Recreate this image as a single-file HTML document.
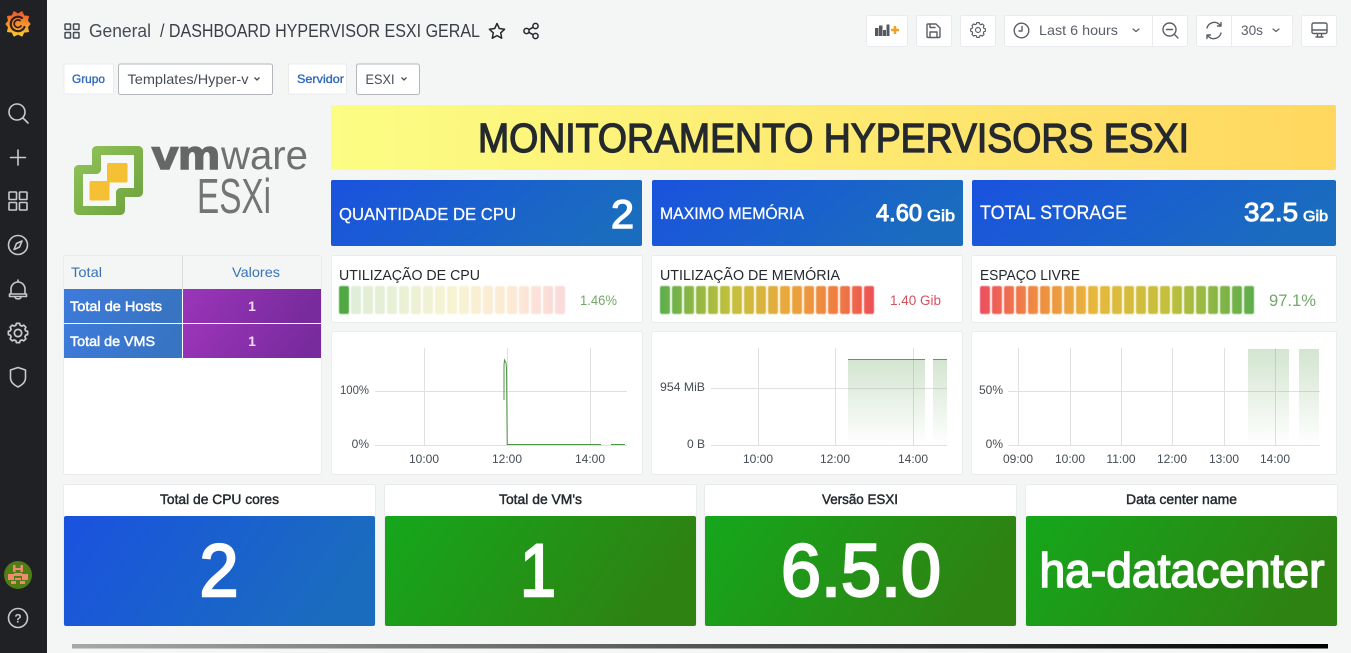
<!DOCTYPE html>
<html><head><meta charset="utf-8"><title>Dashboard</title>
<style>
html,body{margin:0;padding:0;width:1351px;height:653px;overflow:hidden;background:#f4f5f5}
svg{display:block;font-family:"Liberation Sans",sans-serif}
.p{fill:#fff;stroke:#e9ebee;stroke-width:1}
.ax{font-size:12px;fill:#464c54}
.gl{stroke:#dfe0e2;stroke-width:1;fill:none}
.ic{fill:none;stroke:#c7c9cb;stroke-width:1.6;stroke-linecap:round;stroke-linejoin:round}
.tb{fill:none;stroke:#5a5f66;stroke-width:1.4;stroke-linecap:round;stroke-linejoin:round}
.w{fill:#fff}
.m{stroke-width:.6;stroke:currentColor}
.t{fill:#24292e;font-size:14px}
</style></head><body>
<svg width="1351" height="653" viewBox="0 0 1351 653" xmlns="http://www.w3.org/2000/svg">
<defs>
<linearGradient id="yel" x1="0" x2="1" y1="0" y2="0"><stop offset="0" stop-color="#fcfd84"/><stop offset="1" stop-color="#ffd75f"/></linearGradient>
<linearGradient id="blu" x1="0" x2="1" y1="0" y2=".25"><stop offset="0" stop-color="#1a52df"/><stop offset="1" stop-color="#1a6cbf"/></linearGradient>
<linearGradient id="grn" x1="0" x2="1" y1="0" y2=".25"><stop offset="0" stop-color="#15a71c"/><stop offset="1" stop-color="#2e8212"/></linearGradient>
<linearGradient id="tb1" x1="0" x2="1" y1="0" y2=".2"><stop offset="0" stop-color="#3e7bdc"/><stop offset="1" stop-color="#3874c2"/></linearGradient>
<linearGradient id="tb2" x1="0" x2="1" y1="0" y2=".2"><stop offset="0" stop-color="#9c35bb"/><stop offset="1" stop-color="#782b9c"/></linearGradient>
<linearGradient id="bot" x1="0" x2="1" y1="0" y2="0"><stop offset="0" stop-color="#a8a8a8"/><stop offset="1" stop-color="#000"/></linearGradient>
<linearGradient id="area" x1="0" x2="0" y1="0" y2="1"><stop offset="0" stop-color="#5a9e50" stop-opacity=".27"/><stop offset="1" stop-color="#5a9e50" stop-opacity="0"/></linearGradient>
<linearGradient id="gf" x1="0" x2="0" y1="0" y2="1"><stop offset="0" stop-color="#f0562a"/><stop offset="1" stop-color="#fbca2b"/></linearGradient>
<linearGradient id="lg" x1="0" x2="1" y1="0" y2="1"><stop offset="0" stop-color="#8fc257"/><stop offset="1" stop-color="#6fa33f"/></linearGradient>
<linearGradient id="gc" gradientUnits="userSpaceOnUse" x1="339" x2="565" y1="0" y2="0"><stop offset="0" stop-color="#58ad4a"/><stop offset=".5" stop-color="#d9c83c"/><stop offset=".75" stop-color="#f0a040"/><stop offset="1" stop-color="#ec4f55"/></linearGradient>
<linearGradient id="gm" gradientUnits="userSpaceOnUse" x1="660" x2="874" y1="0" y2="0"><stop offset="0" stop-color="#5cae4c"/><stop offset=".33" stop-color="#c4c03c"/><stop offset=".6" stop-color="#eaa83c"/><stop offset=".83" stop-color="#f07c42"/><stop offset="1" stop-color="#ec4f55"/></linearGradient>
<linearGradient id="gs" gradientUnits="userSpaceOnUse" x1="980" x2="1254" y1="0" y2="0"><stop offset="0" stop-color="#ec4f60"/><stop offset=".2" stop-color="#f08a42"/><stop offset=".42" stop-color="#e6b83c"/><stop offset=".68" stop-color="#c4c03c"/><stop offset="1" stop-color="#5cae4c"/></linearGradient>
<filter id="soft" x="-2%" y="-10%" width="104%" height="120%"><feGaussianBlur stdDeviation=".6"/></filter>
</defs>
<rect width="1351" height="653" fill="#f4f5f5"/>
<!-- sidebar -->
<rect width="47" height="653" fill="#1f2125"/>
<polygon points="30,24 27.5,27.1 28.5,31.6 23.9,32.1 22,36 18,34 14,36 12.1,32.1 7.500,31.6 8.500,27.1 6,24 8.500,20.900 7.500,16.400 12.100,15.900 14,11.600 18,14 22,11.600 23.900,15.900 28.500,16.400 27.500,20.900" fill="url(#gf)" stroke="url(#gf)" stroke-width="1" stroke-linejoin="round"/>
<path d="M24.500 27a7.200 7.200 0 1 1-2.500-9" fill="none" stroke="#33201f" stroke-width="2.200" stroke-linecap="round"/>
<path d="M21 26a3.800 3.800 0 1 1-1-5.500" fill="none" stroke="#33201f" stroke-width="1.800" stroke-linecap="round"/>
<g class="ic">
<circle cx="17" cy="112" r="8"/><path d="M23 118l5 5"/>
<path d="M18 150v15M10.500 157.500h15"/>
<rect x="9" y="192" width="7.500" height="7.500" rx=".8"/><rect x="19.500" y="192" width="7.500" height="7.500" rx=".8"/><rect x="9" y="202.500" width="7.500" height="7.500" rx=".8"/><rect x="19.500" y="202.500" width="7.500" height="7.500" rx=".8"/>
<circle cx="18" cy="245" r="9.500"/><path d="M22 241l-2.500 6-3 1.500-2.500 1 2.500-6z"/>
<path d="M18 280v2M11 294v-5a7 7 0 0 1 14 0v5M9.500 294h17v2.500h-17zM15 297c0 2.500 6 2.500 6 0"/>
<g transform="translate(18 333) scale(1.08)"><path d="M-1.500-8.900h3l.5 1.800 1.600.7 1.700-.9 2 2-.9 1.700.7 1.600 1.800.5v3l-1.800.5-.7 1.600.9 1.700-2 2-1.700-.9-1.600.7-.5 1.800h-3l-.5-1.800-1.600-.7-1.700.9-2-2 .9-1.700-.7-1.600-1.800-.5v-3l1.800-.5.7-1.600-.9-1.700 2-2 1.700.9 1.600-.7z"/><circle cx="0" cy="0" r="3.400"/></g>
<path d="M10.500 370l7.500-2.500 7.500 2.500v8c0 4-3.500 7-7.500 9-4-2-7.500-5-7.500-9z"/>
<circle cx="18" cy="618" r="9.500"/>
</g>
<text x="18" y="622.500" text-anchor="middle" font-size="12" font-weight="bold" fill="#c7c9cb">?</text>
<circle cx="18" cy="575" r="14" fill="#4f7d16"/>
<g fill="#f08a6e"><rect x="13" y="565" width="2.500" height="7"/><rect x="20.500" y="565" width="2.500" height="7"/><rect x="13" y="568" width="10" height="2"/><rect x="8" y="574" width="6" height="6"/><rect x="22" y="574" width="6" height="6"/><rect x="14" y="573" width="8" height="3"/><rect x="15" y="578" width="6" height="2"/><rect x="11" y="581" width="5" height="3"/><rect x="20" y="581" width="5" height="3"/></g>
<!-- header -->
<g fill="none" stroke="#464c54" stroke-width="1.500"><rect x="65" y="24" width="5.500" height="5.500" rx=".6"/><rect x="73.500" y="24" width="5.500" height="5.500" rx=".6"/><rect x="65" y="32.500" width="5.500" height="5.500" rx=".6"/><rect x="73.500" y="32.500" width="5.500" height="5.500" rx=".6"/></g>
<text x="89" y="37" font-size="18" fill="#464c54" textLength="62" lengthAdjust="spacingAndGlyphs">General</text>
<text x="160" y="37" font-size="18" fill="#3a3f46" textLength="320" lengthAdjust="spacingAndGlyphs">/ DASHBOARD HYPERVISOR ESXI GERAL</text>
<path d="M497 23.500l2.300 5 5.300.7-3.900 3.700 1 5.300-4.700-2.600-4.700 2.600 1-5.300-3.900-3.700 5.300-.7z" fill="none" stroke="#24292e" stroke-width="1.500" stroke-linejoin="round"/>
<g fill="none" stroke="#24292e" stroke-width="1.500"><circle cx="535.500" cy="26" r="2.600"/><circle cx="526.500" cy="31" r="2.600"/><circle cx="535.500" cy="36" r="2.600"/><path d="M528.800 29.700l4.400-2.500M528.800 32.300l4.400 2.500"/></g>
<!-- toolbar -->
<g class="p"><rect x="866.500" y="15.500" width="41" height="31" rx="2"/><rect x="916.500" y="15.500" width="35" height="31" rx="2"/><rect x="960.500" y="15.500" width="35" height="31" rx="2"/><rect x="1004.500" y="15.500" width="183" height="31" rx="2"/><rect x="1196.500" y="15.500" width="96" height="31" rx="2"/><rect x="1301.500" y="15.500" width="35" height="31" rx="2"/></g>
<path d="M1152.500 15.500v31M1231.500 15.500v31" stroke="#e9ebee"/>
<g fill="#55595f"><rect x="875" y="28" width="3.500" height="8"/><rect x="879" y="25.500" width="3.500" height="10.500"/><rect x="883" y="30" width="3" height="6"/><rect x="886.500" y="24.500" width="3" height="11.500"/></g>
<path d="M895 26v8M891 30h8" stroke="#f2a02d" stroke-width="2.600"/>
<g class="tb">
<path d="M928 24h8l4 4v8.500a1 1 0 0 1-1 1h-11a1 1 0 0 1-1-1v-11.500a1 1 0 0 1 1-1zM930 37v-5h7v5M930 24v3.500h5"/>
<g transform="translate(978 30) scale(.83)"><path d="M-1.500-8.900h3l.5 1.800 1.600.7 1.700-.9 2 2-.9 1.700.7 1.600 1.800.5v3l-1.800.5-.7 1.600.9 1.700-2 2-1.700-.9-1.600.7-.5 1.800h-3l-.5-1.800-1.600-.7-1.700.9-2-2 .9-1.700-.7-1.600-1.800-.5v-3l1.800-.5.7-1.600-.9-1.700 2-2 1.700.9 1.600-.7z"/><circle cx="0" cy="0" r="3"/></g>
<circle cx="1021.500" cy="30.500" r="7.300"/><path d="M1022 26.500v4.500h-3"/>
<path d="M1133 29l3 2.500 3-2.500" stroke-width="1.200"/>
<circle cx="1169.500" cy="29.500" r="6.500"/><path d="M1166.500 29.500h6M1174.500 34.500l3.500 3.500"/>
<path d="M1207 28a7.500 7.500 0 0 1 12.500-3.500l1.500 1.500v-3.500M1221 33a7.500 7.500 0 0 1-12.500 3.500l-1.500-1.500v3.500M1221 26h-3.500M1207 35h3.500"/>
<path d="M1273 29l3 2.500 3-2.500" stroke-width="1.200"/>
<rect x="1312" y="23" width="15" height="10.500" rx="1.500"/><path d="M1312 30h15M1316 37h7M1317.500 34v3M1321.500 34v3"/>
</g>
<text x="1039" y="35" font-size="14" fill="#5a5f66" textLength="79" lengthAdjust="spacingAndGlyphs">Last 6 hours</text>
<text x="1241" y="35" font-size="14" fill="#5a5f66" textLength="22" lengthAdjust="spacingAndGlyphs">30s</text>
<!-- variables -->
<rect class="p" x="64" y="64" width="49.500" height="30" rx="1"/>
<rect x="118.500" y="64" width="154" height="30.500" rx="2" fill="#fff" stroke="#b3b6ba"/>
<rect class="p" x="288.500" y="64" width="58" height="30" rx="1"/>
<rect x="356.500" y="64" width="63" height="30.500" rx="2" fill="#fff" stroke="#b3b6ba"/>
<text x="72" y="83" font-size="12" fill="#2f68bd" class="m" color="#2f68bd" style="stroke-width:.35" textLength="33" lengthAdjust="spacingAndGlyphs">Grupo</text>
<text x="297" y="83" font-size="12" fill="#2f68bd" class="m" color="#2f68bd" style="stroke-width:.35" textLength="47" lengthAdjust="spacingAndGlyphs">Servidor</text>
<text x="127.500" y="84" font-size="14" fill="#464c54" textLength="121" lengthAdjust="spacingAndGlyphs">Templates/Hyper-v</text>
<text x="365.500" y="84" font-size="14" fill="#464c54" textLength="29" lengthAdjust="spacingAndGlyphs">ESXI</text>
<path d="M254.500 77.500l2.500 2.500 2.500-2.500M401.500 77.500l2.500 2.500 2.500-2.500" fill="none" stroke="#464c54" stroke-width="1.300"/>
<!-- logo -->
<path d="M96.500 150.500H138.500V192.500H120.500V210.500H78.500V169.500H96.500Z" fill="#f6f7f7" stroke="url(#lg)" stroke-width="9" stroke-linejoin="round"/>
<rect x="107" y="163" width="20.500" height="19.500" rx="1.500" fill="#f5c033"/>
<rect x="89.500" y="181" width="20" height="19.500" rx="1.500" fill="#f5c033"/>
<text x="152" y="169" font-size="41" font-weight="bold" fill="#666" stroke="#666" stroke-width="1.600" textLength="68" lengthAdjust="spacingAndGlyphs">vm</text>
<text x="221" y="169" font-size="41" fill="#707070" textLength="87" lengthAdjust="spacingAndGlyphs">ware</text>
<text x="197" y="213" font-size="49" fill="#747474" textLength="74" lengthAdjust="spacingAndGlyphs">ESXi</text>
<!-- title -->
<rect x="331" y="105" width="1005" height="65" rx="2" fill="url(#yel)"/>
<text x="478" y="152" font-size="41" fill="#24292e" class="m" color="#24292e" style="stroke-width:1.300" textLength="711" lengthAdjust="spacingAndGlyphs">MONITORAMENTO HYPERVISORS ESXI</text>
<!-- stats -->
<rect x="331" y="180" width="311" height="66" rx="2" fill="url(#blu)"/>
<rect x="652" y="180" width="311" height="66" rx="2" fill="url(#blu)"/>
<rect x="972" y="180" width="364" height="66" rx="2" fill="url(#blu)"/>
<text class="w m" color="#fff" style="stroke-width:.25" x="339" y="220" font-size="17.500" textLength="177" lengthAdjust="spacingAndGlyphs">QUANTIDADE DE CPU</text>
<text class="w m" color="#fff" style="stroke-width:1.400" x="611" y="228" font-size="40" textLength="23" lengthAdjust="spacingAndGlyphs">2</text>
<text class="w m" color="#fff" style="stroke-width:.25" x="660" y="219" font-size="16.500" textLength="144" lengthAdjust="spacingAndGlyphs">MAXIMO MEMÓRIA</text>
<text class="w m" color="#fff" style="stroke-width:1" x="876" y="221" font-size="24" textLength="46" lengthAdjust="spacingAndGlyphs">4.60</text>
<text class="w m" color="#fff" style="stroke-width:.7" x="927" y="221" font-size="16" textLength="28" lengthAdjust="spacingAndGlyphs">Gib</text>
<text class="w m" color="#fff" style="stroke-width:.25" x="980" y="219" font-size="19" textLength="147" lengthAdjust="spacingAndGlyphs">TOTAL STORAGE</text>
<text class="w m" color="#fff" style="stroke-width:1" x="1244" y="221" font-size="26" textLength="54" lengthAdjust="spacingAndGlyphs">32.5</text>
<text class="w m" color="#fff" style="stroke-width:.7" x="1303" y="221" font-size="15" textLength="25" lengthAdjust="spacingAndGlyphs">Gib</text>
<!-- table -->
<rect class="p" x="63.500" y="255.500" width="258" height="219" rx="2"/>
<rect x="64" y="256" width="257" height="33" fill="#f4f5f5"/>
<path d="M182.500 256v33" stroke="#dcdcdc"/>
<rect x="64" y="289" width="118" height="34" fill="url(#tb1)"/>
<rect x="183" y="289" width="138" height="34" fill="url(#tb2)"/>
<rect x="64" y="324" width="118" height="34" fill="url(#tb1)"/>
<rect x="183" y="324" width="138" height="34" fill="url(#tb2)"/>
<text x="71" y="277" font-size="14" fill="#3a72b8" textLength="31" lengthAdjust="spacingAndGlyphs">Total</text>
<text x="232" y="277" font-size="14" fill="#3a72b8" textLength="48" lengthAdjust="spacingAndGlyphs">Valores</text>
<text class="w m" color="#fff" style="stroke-width:.5" x="70" y="311" font-size="14" textLength="92" lengthAdjust="spacingAndGlyphs">Total de Hosts</text>
<text class="w m" color="#fff" style="stroke-width:.5" x="70" y="346" font-size="14" textLength="85" lengthAdjust="spacingAndGlyphs">Total de VMS</text>
<text x="252" y="311" font-size="14" font-weight="bold" text-anchor="middle" fill="#f3dcf5">1</text>
<text x="252" y="346" font-size="14" font-weight="bold" text-anchor="middle" fill="#f3dcf5">1</text>
<!-- gauges -->
<rect class="p" x="331.500" y="255.500" width="311" height="67" rx="2"/>
<rect class="p" x="651.500" y="255.500" width="311" height="67" rx="2"/>
<rect class="p" x="971.500" y="255.500" width="365" height="67" rx="2"/>
<text x="339" y="280" font-size="14.500" fill="#24292e" textLength="141" lengthAdjust="spacingAndGlyphs">UTILIZAÇÃO DE CPU</text>
<text x="660" y="280" font-size="14.500" fill="#24292e" textLength="180" lengthAdjust="spacingAndGlyphs">UTILIZAÇÃO DE MEMÓRIA</text>
<text x="980" y="280" font-size="14.500" fill="#24292e" textLength="100" lengthAdjust="spacingAndGlyphs">ESPAÇO LIVRE</text>
<text x="580" y="305" font-size="13.500" fill="#73a768" textLength="37" lengthAdjust="spacingAndGlyphs">1.46%</text>
<text x="890" y="305" font-size="13.500" fill="#d4505f" textLength="51" lengthAdjust="spacingAndGlyphs">1.40 Gib</text>
<text x="1269" y="306" font-size="17" fill="#73a768" textLength="47" lengthAdjust="spacingAndGlyphs">97.1%</text>
<g filter="url(#soft)">
<rect x="339" y="286" width="10" height="28" rx="2" fill="#4fa843"/>
<g fill="url(#gc)" opacity=".22">
<rect x="351" y="286" width="10" height="28" rx="2"/><rect x="363" y="286" width="10" height="28" rx="2"/><rect x="375" y="286" width="10" height="28" rx="2"/><rect x="387" y="286" width="10" height="28" rx="2"/><rect x="399" y="286" width="10" height="28" rx="2"/><rect x="411" y="286" width="10" height="28" rx="2"/><rect x="423" y="286" width="10" height="28" rx="2"/><rect x="435" y="286" width="10" height="28" rx="2"/><rect x="447" y="286" width="10" height="28" rx="2"/><rect x="459" y="286" width="10" height="28" rx="2"/><rect x="471" y="286" width="10" height="28" rx="2"/><rect x="483" y="286" width="10" height="28" rx="2"/><rect x="495" y="286" width="10" height="28" rx="2"/><rect x="507" y="286" width="10" height="28" rx="2"/><rect x="519" y="286" width="10" height="28" rx="2"/><rect x="531" y="286" width="10" height="28" rx="2"/><rect x="543" y="286" width="10" height="28" rx="2"/><rect x="555" y="286" width="10" height="28" rx="2"/>
</g>
<g fill="url(#gm)">
<rect x="660" y="286" width="10" height="28" rx="2"/><rect x="672" y="286" width="10" height="28" rx="2"/><rect x="684" y="286" width="10" height="28" rx="2"/><rect x="696" y="286" width="10" height="28" rx="2"/><rect x="708" y="286" width="10" height="28" rx="2"/><rect x="720" y="286" width="10" height="28" rx="2"/><rect x="732" y="286" width="10" height="28" rx="2"/><rect x="744" y="286" width="10" height="28" rx="2"/><rect x="756" y="286" width="10" height="28" rx="2"/><rect x="768" y="286" width="10" height="28" rx="2"/><rect x="780" y="286" width="10" height="28" rx="2"/><rect x="792" y="286" width="10" height="28" rx="2"/><rect x="804" y="286" width="10" height="28" rx="2"/><rect x="816" y="286" width="10" height="28" rx="2"/><rect x="828" y="286" width="10" height="28" rx="2"/><rect x="840" y="286" width="10" height="28" rx="2"/><rect x="852" y="286" width="10" height="28" rx="2"/><rect x="864" y="286" width="10" height="28" rx="2"/>
</g>
<g fill="url(#gs)">
<rect x="980" y="286" width="10" height="28" rx="2"/><rect x="992" y="286" width="10" height="28" rx="2"/><rect x="1004" y="286" width="10" height="28" rx="2"/><rect x="1016" y="286" width="10" height="28" rx="2"/><rect x="1028" y="286" width="10" height="28" rx="2"/><rect x="1040" y="286" width="10" height="28" rx="2"/><rect x="1052" y="286" width="10" height="28" rx="2"/><rect x="1064" y="286" width="10" height="28" rx="2"/><rect x="1076" y="286" width="10" height="28" rx="2"/><rect x="1088" y="286" width="10" height="28" rx="2"/><rect x="1100" y="286" width="10" height="28" rx="2"/><rect x="1112" y="286" width="10" height="28" rx="2"/><rect x="1124" y="286" width="10" height="28" rx="2"/><rect x="1136" y="286" width="10" height="28" rx="2"/><rect x="1148" y="286" width="10" height="28" rx="2"/><rect x="1160" y="286" width="10" height="28" rx="2"/><rect x="1172" y="286" width="10" height="28" rx="2"/><rect x="1184" y="286" width="10" height="28" rx="2"/><rect x="1196" y="286" width="10" height="28" rx="2"/><rect x="1208" y="286" width="10" height="28" rx="2"/><rect x="1220" y="286" width="10" height="28" rx="2"/><rect x="1232" y="286" width="10" height="28" rx="2"/><rect x="1244" y="286" width="10" height="28" rx="2"/>
</g>
</g>
<!-- charts -->
<rect class="p" x="331.500" y="331.500" width="311" height="143" rx="2"/>
<rect class="p" x="651.500" y="331.500" width="311" height="143" rx="2"/>
<rect class="p" x="971.500" y="331.500" width="365" height="143" rx="2"/>
<path class="gl" d="M424.500 348v98M507.500 348v98M590.500 348v98M375 391.500h252M375 445.500h252"/>
<path d="M504 400V365l.5-5 1.500 3 .5 5 .7 76.500H601M611 444.500h14" fill="none" stroke="#4f9446" stroke-width="1"/>
<text class="ax" x="340" y="394" textLength="29" lengthAdjust="spacingAndGlyphs">100%</text>
<text class="ax" x="369" y="448" text-anchor="end">0%</text>
<text class="ax" x="424" y="463" text-anchor="middle">10:00</text>
<text class="ax" x="507" y="463" text-anchor="middle">12:00</text>
<text class="ax" x="590" y="463" text-anchor="middle">14:00</text>
<path class="gl" d="M758.500 348v98M835.500 348v98M913.500 348v98M711 388.500h236M711 445.500h236"/>
<rect x="848" y="359" width="77" height="86" fill="url(#area)"/>
<rect x="933" y="359" width="14" height="86" fill="url(#area)"/>
<path d="M848 359.500h77M933 359.500h14" stroke="#5a9e50"/>
<text class="ax" x="660" y="391" textLength="45" lengthAdjust="spacingAndGlyphs">954 MiB</text>
<text class="ax" x="705" y="448" text-anchor="end">0 B</text>
<text class="ax" x="758" y="463" text-anchor="middle">10:00</text>
<text class="ax" x="835" y="463" text-anchor="middle">12:00</text>
<text class="ax" x="913" y="463" text-anchor="middle">14:00</text>
<path class="gl" d="M1018.500 348v98M1070.500 348v98M1121.500 348v98M1172.500 348v98M1224.500 348v98M1275.500 348v98M1008 391.500h312M1008 445.500h312"/>
<rect x="1248" y="349" width="41" height="96" fill="url(#area)"/>
<rect x="1299" y="349" width="20" height="96" fill="url(#area)"/>
<text class="ax" x="1003" y="394" text-anchor="end">50%</text>
<text class="ax" x="1003" y="448" text-anchor="end">0%</text>
<text class="ax" x="1018" y="463" text-anchor="middle">09:00</text>
<text class="ax" x="1070" y="463" text-anchor="middle">10:00</text>
<text class="ax" x="1121" y="463" text-anchor="middle">11:00</text>
<text class="ax" x="1172" y="463" text-anchor="middle">12:00</text>
<text class="ax" x="1224" y="463" text-anchor="middle">13:00</text>
<text class="ax" x="1275" y="463" text-anchor="middle">14:00</text>
<!-- bottom panels -->
<rect class="p" x="63.500" y="484.500" width="312" height="141" rx="2"/>
<rect class="p" x="384.500" y="484.500" width="312" height="141" rx="2"/>
<rect class="p" x="704.500" y="484.500" width="312" height="141" rx="2"/>
<rect class="p" x="1025.500" y="484.500" width="312" height="141" rx="2"/>
<rect x="64" y="516" width="311" height="110" rx="2" fill="url(#blu)"/>
<rect x="385" y="516" width="311" height="110" rx="2" fill="url(#grn)"/>
<rect x="705" y="516" width="311" height="110" rx="2" fill="url(#grn)"/>
<rect x="1026" y="516" width="311" height="110" rx="2" fill="url(#grn)"/>
<text class="t m" color="#24292e" style="stroke-width:.45" x="160" y="504" textLength="119" lengthAdjust="spacingAndGlyphs">Total de CPU cores</text>
<text class="t m" color="#24292e" style="stroke-width:.45" x="499" y="504" textLength="83" lengthAdjust="spacingAndGlyphs">Total de VM's</text>
<text class="t m" color="#24292e" style="stroke-width:.45" x="822" y="504" textLength="76" lengthAdjust="spacingAndGlyphs">Versão ESXI</text>
<text class="t m" color="#24292e" style="stroke-width:.45" x="1126" y="504" textLength="111" lengthAdjust="spacingAndGlyphs">Data center name</text>
<text class="w m" color="#fff" style="stroke-width:2.400" x="199.500" y="596" font-size="74" textLength="39" lengthAdjust="spacingAndGlyphs">2</text>
<text class="w m" color="#fff" style="stroke-width:2.400" x="520" y="596" font-size="74" textLength="36" lengthAdjust="spacingAndGlyphs">1</text>
<text class="w m" color="#fff" style="stroke-width:2.400" x="781" y="596" font-size="74" textLength="160" lengthAdjust="spacingAndGlyphs">6.5.0</text>
<text class="w m" color="#fff" style="stroke-width:1.600" x="1039.500" y="587" font-size="48" textLength="285" lengthAdjust="spacingAndGlyphs">ha-datacenter</text>
<rect x="72" y="644" width="1256" height="4.500" fill="url(#bot)"/>
</svg>
</body></html>
